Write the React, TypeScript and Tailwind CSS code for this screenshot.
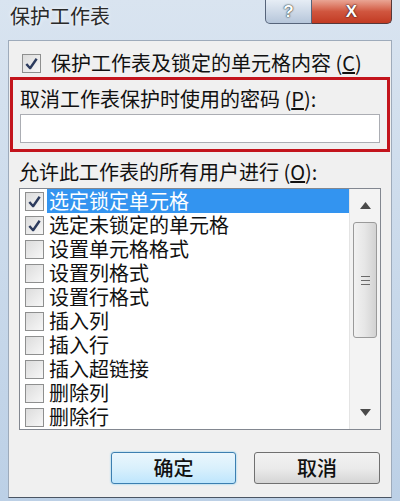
import React from "react";

const items = [
  { label: "选定锁定单元格", checked: true, selected: true },
  { label: "选定未锁定的单元格", checked: true },
  { label: "设置单元格格式", checked: false },
  { label: "设置列格式", checked: false },
  { label: "设置行格式", checked: false },
  { label: "插入列", checked: false },
  { label: "插入行", checked: false },
  { label: "插入超链接", checked: false },
  { label: "删除列", checked: false },
  { label: "删除行", checked: false },
];

function CheckBox({ checked, size = 19 }: { checked: boolean; size?: number }) {
  return (
    <span
      className="flex shrink-0 items-center justify-center border border-[#8e8f8f] bg-gradient-to-br from-[#dcdcdc] to-[#f7f7f7]"
      style={{ width: size, height: size }}
    >
      {checked && (
        <svg width="15" height="15" viewBox="0 0 16 16">
          <path d="M2.5 8.5 L6.5 13 L13.5 3" fill="none" stroke="#2c3b5e" strokeWidth="2.6" strokeLinejoin="round" />
        </svg>
      )}
    </span>
  );
}

function Scrollbar() {
  return (
    <div className="flex w-[31px] shrink-0 flex-col border-l border-[#e4e4e4] bg-[#f3f3f3]">
      {/* up arrow */}
      <div className="flex h-[33px] items-center justify-center">
        <svg width="11" height="7" viewBox="0 0 11 7">
          <path d="M0 7 L5.5 0 L11 7 Z" fill="#4a4a4a" />
        </svg>
      </div>
      {/* thumb */}
      <div className="mx-[3px] flex h-[116px] items-center justify-center rounded-[3px] border border-[#9a9a9a] bg-gradient-to-r from-[#f2f2f2] via-[#e6e6e6] to-[#d2d2d2]">
        <div className="flex flex-col gap-[3px]">
          <span className="block h-[1px] w-[9px] bg-[#6a6a6a]" />
          <span className="block h-[1px] w-[9px] bg-[#6a6a6a]" />
          <span className="block h-[1px] w-[9px] bg-[#6a6a6a]" />
        </div>
      </div>
      <div className="flex-1" />
      {/* down arrow */}
      <div className="flex h-[33px] items-center justify-center">
        <svg width="11" height="7" viewBox="0 0 11 7">
          <path d="M0 0 L11 0 L5.5 7 Z" fill="#4a4a4a" />
        </svg>
      </div>
    </div>
  );
}

export default function App() {
  return (
    <div className="flex h-[501px] w-[400px] flex-col overflow-hidden bg-gradient-to-b from-[#d9e4f0] to-[#bcd0e6] font-['Noto_Sans_CJK_SC','Microsoft_YaHei',sans-serif] text-[#111]">
      {/* TITLE BAR */}
      <div className="flex h-[40px] shrink-0 items-start justify-between">
        <span className="pl-[10px] pt-[3px] text-[20px] leading-[26px] text-[#2a2a2a] [text-shadow:0_0_4px_#fff]">保护工作表</span>
        <div className="mr-[8px] flex h-[24px]">
          <div className="flex w-[47px] items-center justify-center rounded-bl-[5px] border border-t-0 border-[#56647a] bg-gradient-to-b from-[#e6edf5] to-[#b6c6da]">
            <span className="font-['Liberation_Sans',sans-serif] text-[17px] font-bold leading-[18px] text-white [text-shadow:0_0_2px_#233,0_0_1px_#233]">?</span>
          </div>
          <div className="flex w-[80px] items-center justify-center rounded-br-[5px] border border-l-0 border-t-0 border-[#56383a] bg-gradient-to-b from-[#e9a594] via-[#d0563f] to-[#c23a22]">
            <span className="font-['Liberation_Sans',sans-serif] text-[17px] font-bold leading-[18px] text-white [text-shadow:0_0_2px_#311,0_0_1px_#311]">X</span>
          </div>
        </div>
      </div>

      {/* PANEL */}
      <div className="mx-[8px] flex h-[458px] shrink-0 flex-col border border-[#9eabbb] border-b-[#4b5563] bg-[#f0f0f0]">
        {/* protect checkbox */}
        <div className="flex h-[36px] items-center gap-[10px] pl-[13px] pt-[8px]">
          <CheckBox checked size={19} />
          <span className="text-[20px] leading-[22px]">
            保护工作表及锁定的单元格内容 (<u>C</u>)
          </span>
        </div>

        {/* password block */}
        <div className="mx-[1px] flex h-[75px] flex-col border-[3px] border-[#c3141c] px-[7px]">
          <span className="pt-[8px] text-[20px] leading-[22px]">
            取消工作表保护时使用的密码 (<u>P</u>):
          </span>
          <div className="mt-[4px] h-[29px] border border-[#abadb3] bg-white" />
        </div>

        {/* allow label */}
        <span className="ml-[10px] mt-[9px] text-[20px] leading-[22px]">
          允许此工作表的所有用户进行 (<u>O</u>):
        </span>

        {/* list */}
        <div className="mx-[10px] mt-[5px] flex h-[242px] border border-[#828790] bg-white">
          <div className="flex flex-1 flex-col">
            {items.map((item) => (
              <div key={item.label} className="flex h-[24px] items-center pl-[5px]">
                <CheckBox checked={item.checked} />
                <span
                  className={
                    item.selected
                      ? "ml-[3px] flex h-[24px] flex-1 items-center bg-[#3394f0] pl-[2px] text-[20px] leading-[20px] text-white"
                      : "ml-[3px] pl-[2px] text-[20px] leading-[20px]"
                  }
                >
                  {item.label}
                </span>
              </div>
            ))}
          </div>
          <Scrollbar />
        </div>

        {/* buttons */}
        <div className="mt-[22px] flex justify-end gap-[18px] pr-[11px]">
          <button className="h-[32px] w-[125px] rounded-[3px] border border-[#3c7fb1] bg-gradient-to-b from-[#eaf6fd] via-[#d9f0fc] to-[#bee6fd] text-[20px] font-medium leading-none shadow-[0_0_2px_#6cc6f0]">
            确定
          </button>
          <button className="h-[32px] w-[126px] rounded-[3px] border border-[#707070] bg-gradient-to-b from-[#f2f2f2] via-[#ebebeb] to-[#d5d5d5] text-[20px] font-medium leading-none">
            取消
          </button>
        </div>
      </div>
    </div>
  );
}
